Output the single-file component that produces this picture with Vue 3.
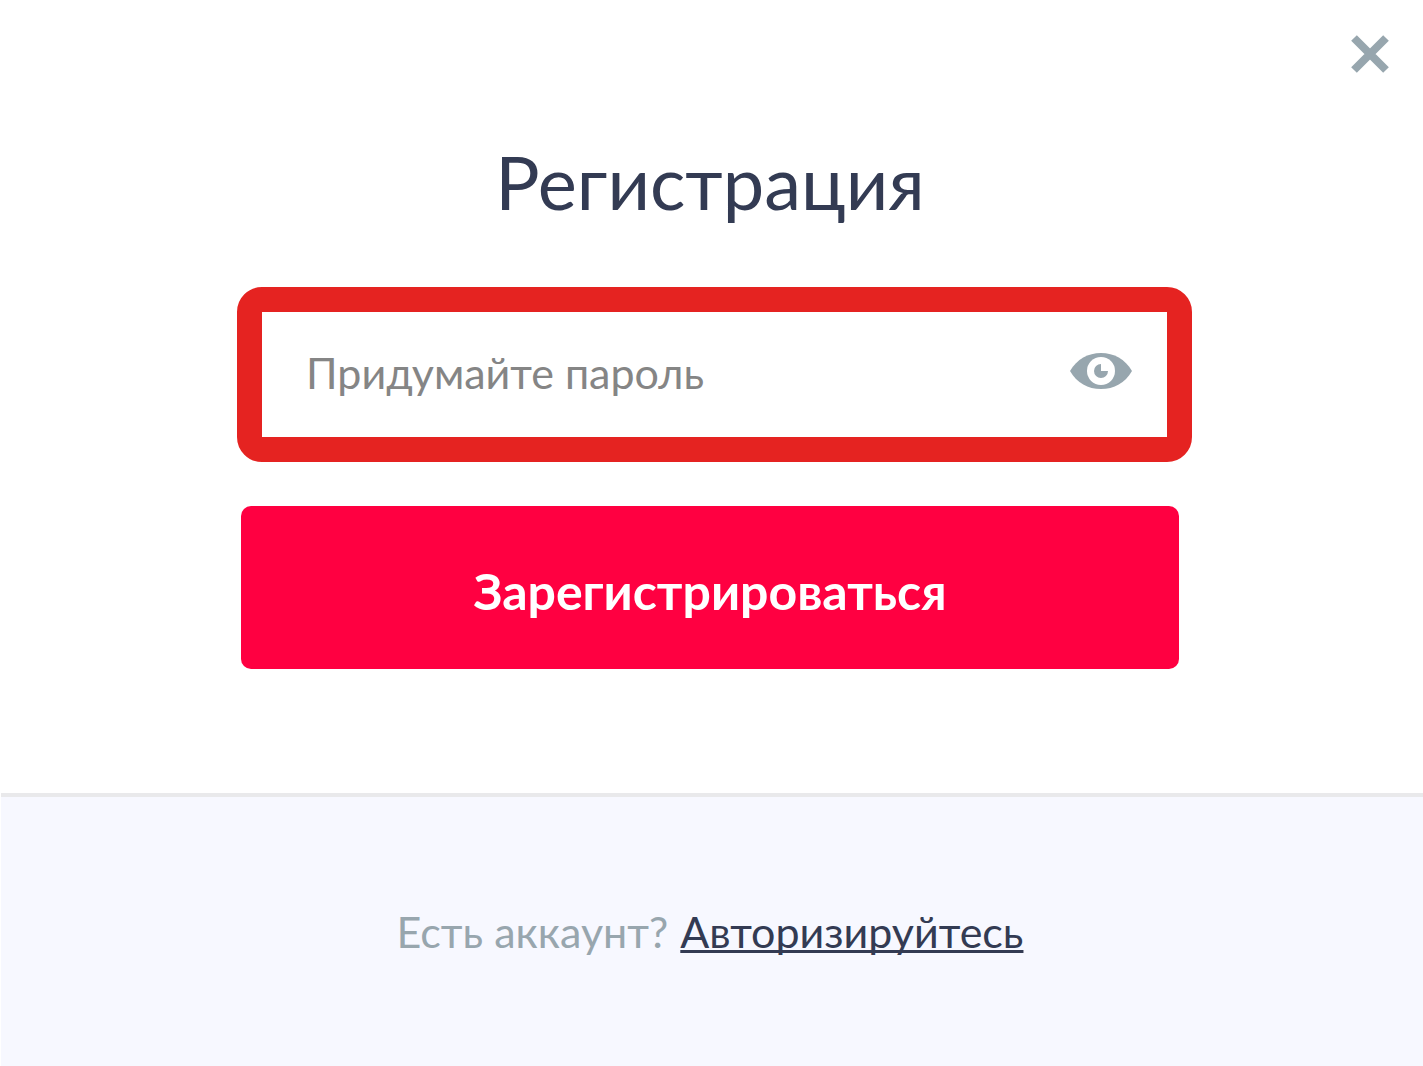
<script setup>
import { ref } from 'vue'

const password = ref('')
const visible = ref(false)
</script>

<template>
  <main class="modal">
    <header class="top">
      <button class="icon-button" type="button" aria-label="Закрыть">
        <svg width="40" height="40" viewBox="0 0 40 40" aria-hidden="true">
          <path d="M4 4 36 36M36 4 4 36" stroke="#97a6ae" stroke-width="8" />
        </svg>
      </button>
    </header>

    <form class="form" @submit.prevent>
      <h1 class="title">Регистрация</h1>
      <div class="field">
        <input
          v-model="password"
          class="input"
          :type="visible ? 'text' : 'password'"
          placeholder="Придумайте пароль"
          aria-label="Придумайте пароль"
        />
        <button class="icon-button" type="button" aria-label="Показать пароль" @click="visible = !visible">
          <svg width="64" height="46" viewBox="0 0 64 46" aria-hidden="true">
            <path d="M1 19C8 7 19 1 32 1s24 6 31 18C56 31 45 37 32 37S8 31 1 19Z" fill="#97a6ae" />
            <circle cx="32" cy="19" r="14" fill="#fff" />
            <path d="M32 12v7h7a7 7 0 1 1-7-7Z" fill="#97a6ae" />
          </svg>
        </button>
      </div>
      <button class="submit" type="submit">Зарегистрироваться</button>
    </form>

    <footer class="footer">
      <span>Есть аккаунт?</span>
      <a class="link" href="#">Авторизируйтесь</a>
    </footer>
  </main>
</template>

<style>
body {
  margin: 0;
  background: #fff;
}
</style>

<style scoped>
.modal {
  font-family: Lato, "Noto Sans", sans-serif;
  font-size: 43px;
  line-height: 52px;
}

.top {
  display: flex;
  justify-content: flex-end;
  padding: 34px 33px 0;
}

.icon-button {
  flex: none;
  padding: 0;
  border: 0;
  background: none;
  cursor: pointer;
}

.icon-button svg {
  display: block;
}

.form {
  display: flex;
  flex-direction: column;
  padding: 65px 244px 124px 241px;
}

.title {
  margin: 0 0 62px;
  color: #333b53;
  font-size: 74px;
  font-weight: 400;
  line-height: 86px;
  text-align: center;
}

.field {
  display: flex;
  align-items: center;
  height: 125px;
  margin: 0 -13px 44px -4px;
  padding: 0 34px 0 44px;
  border: 25px solid #e52321;
  border-radius: 25px;
}

.input {
  flex: 1;
  min-width: 0;
  padding: 0 0 4px;
  border: 0;
  outline: 0;
  background: none;
  color: #333b53;
  font: inherit;
}

.input::placeholder {
  color: #858585;
  opacity: 1;
}

.submit {
  height: 163px;
  padding: 6px 0 0;
  border: 0;
  border-radius: 10px;
  background: #ff0041;
  color: #fff;
  font-family: inherit;
  font-size: 50px;
  font-weight: 700;
  cursor: pointer;
}

.footer {
  display: flex;
  justify-content: center;
  gap: 12px;
  margin-left: 1px;
  padding: 109px 4px 108px 0;
  border-top: 4px solid #e9e9eb;
  background: #f7f8ff;
  color: #98a6ae;
}

.link {
  color: #333b53;
  text-decoration-thickness: 3px;
  text-underline-offset: 2px;
  text-decoration-skip-ink: none;
}
</style>
